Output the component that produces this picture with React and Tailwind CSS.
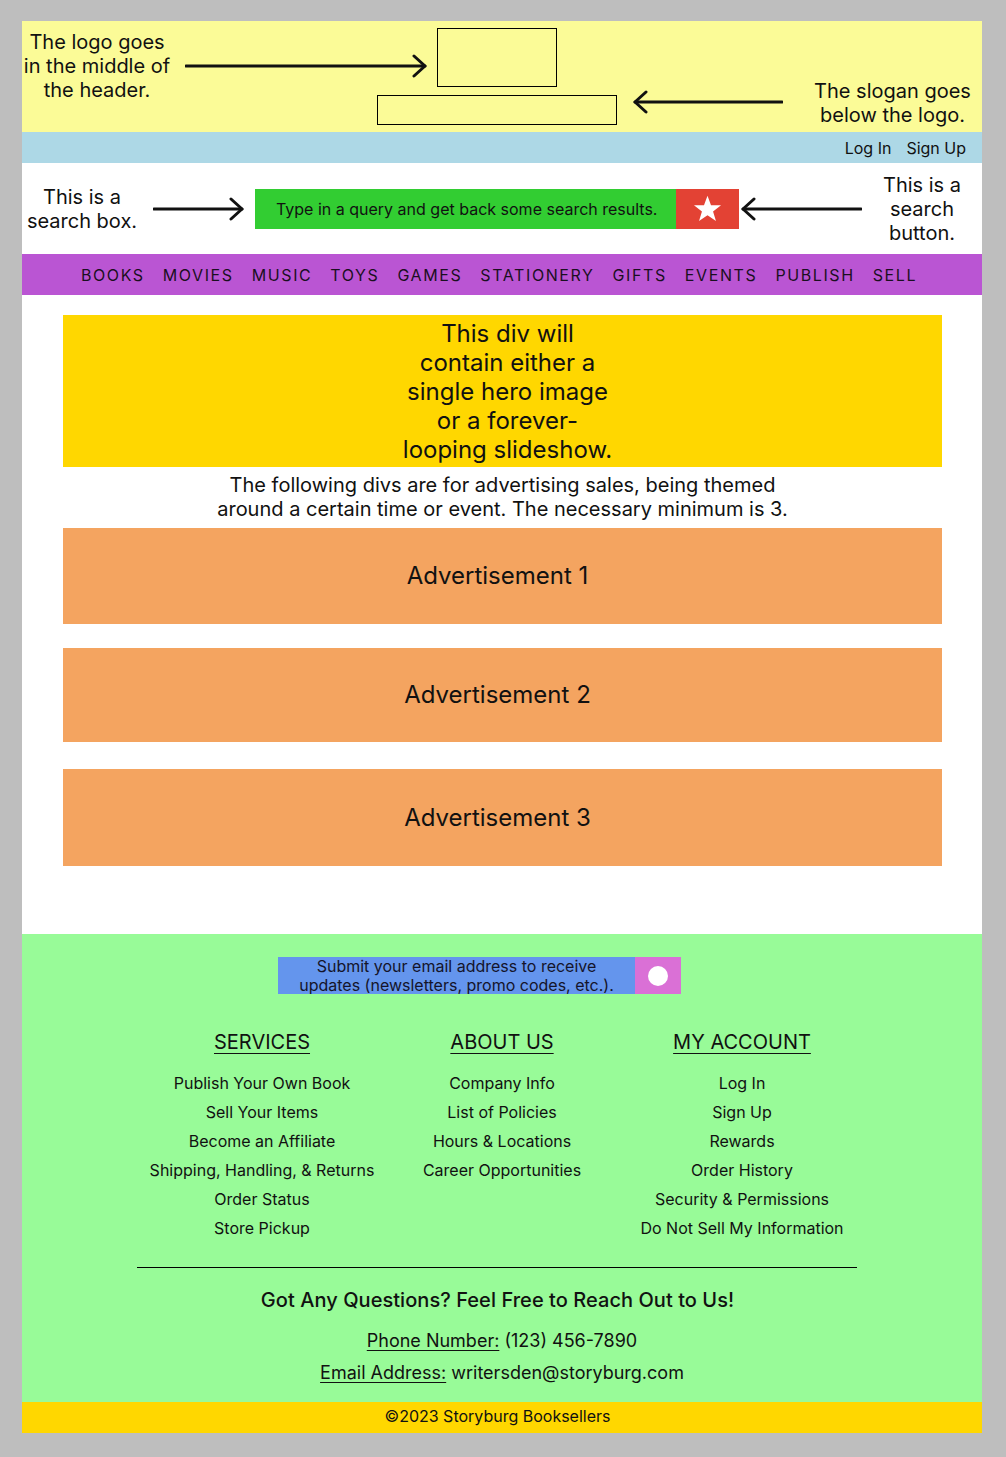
import React from 'react';

const RightArrow = ({ width }) => (
  <svg width={width} height="24" viewBox={`0 0 ${width} 24`} fill="none">
    <line x1="1" y1="12" x2={width - 2} y2="12" stroke="#111" strokeWidth="3" strokeLinecap="round" />
    <polyline points={`${width - 13},2 ${width - 2},12 ${width - 13},22`} stroke="#111" strokeWidth="3" strokeLinecap="round" strokeLinejoin="round" />
  </svg>
);

const LeftArrow = ({ width }) => (
  <svg width={width} height="24" viewBox={`0 0 ${width} 24`} fill="none">
    <line x1="2" y1="12" x2={width - 1} y2="12" stroke="#111" strokeWidth="3" strokeLinecap="round" />
    <polyline points="13,2 2,12 13,22" stroke="#111" strokeWidth="3" strokeLinecap="round" strokeLinejoin="round" />
  </svg>
);

const navItems = ['Books', 'Movies', 'Music', 'Toys', 'Games', 'Stationery', 'Gifts', 'Events', 'Publish', 'Sell'];

const footerCols = [
  {
    title: 'SERVICES',
    links: ['Publish Your Own Book', 'Sell Your Items', 'Become an Affiliate', 'Shipping, Handling, & Returns', 'Order Status', 'Store Pickup'],
  },
  {
    title: 'ABOUT US',
    links: ['Company Info', 'List of Policies', 'Hours & Locations', 'Career Opportunities'],
  },
  {
    title: 'MY ACCOUNT',
    links: ['Log In', 'Sign Up', 'Rewards', 'Order History', 'Security & Permissions', 'Do Not Sell My Information'],
  },
];

export default function App() {
  return (
    <div className="min-h-[1457px] bg-[#bebebe] pt-[21px] pb-[24px] px-[22px] font-[Inter,sans-serif] text-[#111]">
      <div className="w-[960px]">
        {/* header */}
        <header className="bg-[#fbfb97] grid grid-cols-[150px_205px_60px_120px_60px_16px_150px_1fr] grid-rows-[59px_30px] gap-y-[8px] pt-[7px] pb-[7px]">
          <p className="col-start-1 row-start-1 row-span-2 mt-[2px] text-center text-[20px] leading-[24px]">
            The logo goes in the middle of the header.
          </p>
          <div className="col-start-2 col-span-2 row-start-1 pl-[13px] mt-[26px]">
            <RightArrow width={242} />
          </div>
          <div className="col-start-4 row-start-1 border border-black" />
          <div className="col-start-3 col-span-3 row-start-2 border border-black" />
          <div className="col-start-7 row-start-2 -mt-[5px]">
            <LeftArrow width={150} />
          </div>
          <p className="col-start-8 row-start-1 row-span-2 self-start mt-[51px] pl-[20px] text-center text-[20px] leading-[24px]">
            The slogan goes below the logo.
          </p>
        </header>

        {/* account bar */}
        <div className="bg-[#add8e6] h-[31px] flex items-center justify-end gap-[15px] pr-[16px] text-[16px]">
          <span>Log In</span>
          <span>Sign Up</span>
        </div>

        {/* search row */}
        <div className="bg-white h-[91px] flex items-center">
          <p className="w-[120px] text-center text-[20px] leading-[24px]">This is a search box.</p>
          <div className="ml-[11px] w-[91px]">
            <RightArrow width={91} />
          </div>
          <div className="ml-[11px] w-[421px] h-[40px] bg-[#32cd32] flex items-center pl-[21px] text-[16px]">
            Type in a query and get back some search results.
          </div>
          <div className="w-[63px] h-[40px] bg-[#e34234] flex items-center justify-center">
            <svg width="29" height="28" viewBox="0 0 24 23">
              <polygon points="12,0.5 14.9,8.3 23.2,8.4 16.6,13.5 19,21.5 12,16.7 5,21.5 7.4,13.5 0.8,8.4 9.1,8.3" fill="#fff" />
            </svg>
          </div>
          <div className="ml-[2px] w-[121px]">
            <LeftArrow width={121} />
          </div>
          <p className="w-[120px] text-center text-[20px] leading-[24px]">This is a search button.</p>
        </div>

        {/* nav */}
        <nav className="bg-[#ba55d3] h-[41px] flex items-center justify-center gap-[18px] pr-[6px] text-[16px] tracking-[1.6px] uppercase text-[#1a0f1f]">
          {navItems.map((item) => (
            <span key={item}>{item}</span>
          ))}
        </nav>

        {/* main */}
        <main className="bg-white pt-[20px] pb-[68px] pl-[41px] pr-[40px]">
          <div className="bg-[#ffd700] h-[152px] flex items-center justify-center pl-[10px]">
            <p className="w-[214px] text-center text-[24px] leading-[29px]">
              This div will contain either a single hero image or a forever-looping slideshow.
            </p>
          </div>
          <p className="mx-auto mt-[6px] w-[590px] text-center text-[20px] leading-[24px]">
            The following divs are for advertising sales, being themed around a certain time or event. The necessary minimum is 3.
          </p>
          <div className="mt-[7px] flex flex-col">
            <div className="bg-[#f4a460] h-[96px] flex items-center justify-center pr-[10px] text-[24px]">Advertisement 1</div>
            <div className="mt-[24px] bg-[#f4a460] h-[94px] flex items-center justify-center pr-[10px] text-[24px]">Advertisement 2</div>
            <div className="mt-[27px] bg-[#f4a460] h-[97px] flex items-center justify-center pr-[10px] text-[24px]">Advertisement 3</div>
          </div>
        </main>

        {/* footer */}
        <footer className="bg-[#98fb98] pt-[23px] h-[468px]">
          <div className="flex justify-center pr-[45px]">
            <div className="w-[357px] h-[37px] bg-[#6495ed] flex items-center justify-center px-[18px] text-center text-[16px] leading-[19px] text-[#14142a]">
              Submit your email address to receive updates (newsletters, promo codes, etc.).
            </div>
            <div className="w-[46px] h-[37px] bg-[#da70d6] flex items-center justify-center">
              <div className="w-[20px] h-[20px] rounded-full bg-white" />
            </div>
          </div>

          <div className="mx-auto mt-[36px] w-[720px] grid grid-cols-3">
            {footerCols.map((col) => (
              <div key={col.title} className="flex flex-col items-center">
                <h3 className="text-[20px] leading-[24px] underline underline-offset-[4px] decoration-1">{col.title}</h3>
                <ul className="mt-[20px] flex flex-col items-center gap-[10px] text-[16px] leading-[19px]">
                  {col.links.map((link) => (
                    <li key={link}>{link}</li>
                  ))}
                </ul>
              </div>
            ))}
          </div>

          <hr className="ml-[115px] mt-[29px] w-[720px] border-t border-black" />

          <p className="mt-[20px] pr-[9px] text-center text-[20px] leading-[24px] font-medium tracking-[0.05px]">
            Got Any Questions? Feel Free to Reach Out to Us!
          </p>
          <p className="mt-[18px] text-center text-[18px] leading-[22px]">
            <span className="underline underline-offset-[3px] decoration-1">Phone Number:</span> (123) 456-7890
          </p>
          <p className="mt-[10px] text-center text-[18px] leading-[22px]">
            <span className="underline underline-offset-[3px] decoration-1">Email Address:</span> writersden@storyburg.com
          </p>
        </footer>

        <div className="bg-[#ffd700] h-[31px] flex items-center justify-center pr-[9px] pb-[3px] text-[16px]">
          ©2023 Storyburg Booksellers
        </div>
      </div>
    </div>
  );
}
